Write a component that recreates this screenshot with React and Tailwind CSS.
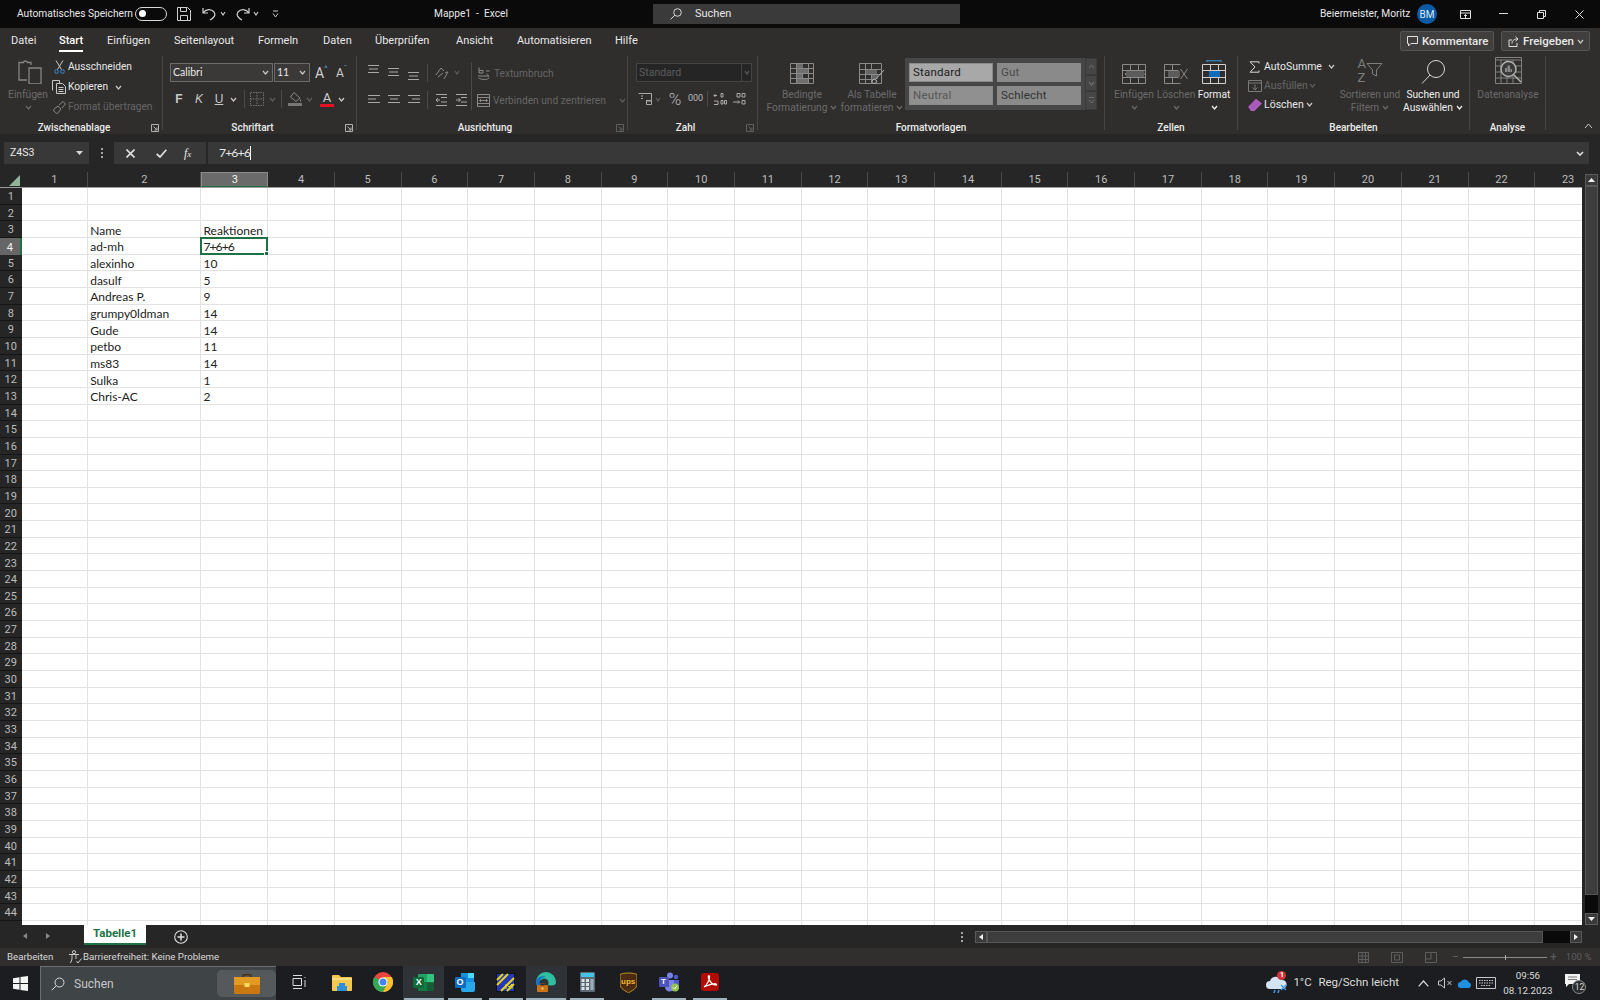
import React from 'react';

const I = ({ w, h = w, c = 'currentColor', sw = 1, children }) => (
  <svg width={w} height={h} viewBox={`0 0 ${w} ${h}`} fill="none" stroke={c} strokeWidth={sw} className="shrink-0 block">{children}</svg>
);
const Chev = ({ c = '#c8c8c8', w = 7 }) => (
  <I w={w} h={5} c={c} sw={1.2}><path d={`M1 1 L${w / 2} 4 L${w - 1} 1`} /></I>
);
const DIM = '#6b6b6b';
const ICON = '#a8a8a8';

const Group = ({ w, label, launcher, children }) => (
  <div className="flex h-[74px] shrink-0 flex-col border-r border-[#454545]" style={{ width: w }}>
    <div className="flex h-[62px]">{children}</div>
    <div className="flex h-[12px] items-center pt-[7px]">
      <div className="flex-1 text-center text-[10px] font-medium leading-[12px] text-[#ececec]">{label}</div>
      {launcher && (
        <div className="flex w-[14px] justify-center">
          <I w={8} h={8} c={launcher === 'dim' ? '#5e5e5e' : '#b0b0b0'}><path d="M.5 7.5v-7h7v7zM2.5 2.5l3.5 3.5M6 3.5V6H3.5" /></I>
        </div>
      )}
    </div>
  </div>
);

const Big = ({ w, icon, l1, l2, chev, color = DIM }) => (
  <div className="flex shrink-0 flex-col items-center" style={{ width: w }}>
    <div className="flex h-[28px] items-end">{icon}</div>
    <div className="mt-[4px] h-[13px] whitespace-nowrap text-[10.2px] leading-[13px]" style={{ color }}>{l1}</div>
    <div className="flex h-[13px] items-center gap-[3px] whitespace-nowrap text-[10.2px] leading-[13px]" style={{ color }}>
      {l2}{chev && <Chev c={color} />}
    </div>
  </div>
);

const Lines = ({ y = 0, rows }) => (
  <I w={13} h={16} c={ICON}>
    {rows.map((r, i) => <path key={i} d={`M${r[0]} ${y + i * 3.5 + .5}H${r[1]}`} />)}
  </I>
);

const Tcell = ({ t, bg, fg, w = 84 }) => (
  <div className="flex h-[19px] items-center border border-[#8a8a8a] pl-[3px] text-[11.5px] tracking-[0.2px]" style={{ width: w, background: bg, color: fg }}>{t}</div>
);

const cols = ['1', '2', '3', '4', '5', '6', '7', '8', '9', '10', '11', '12', '13', '14', '15', '16', '17', '18', '19', '20', '21', '22', '23'];
const colW = (i) => (i === 1 ? 113.3 : 66.7);
const data = { 3: ['Name', 'Reaktionen'], 4: ['ad-mh', '7+6+6'], 5: ['alexinho', '10'], 6: ['dasulf', '5'], 7: ['Andreas P.', '9'], 8: ['grumpy0ldman', '14'], 9: ['Gude', '14'], 10: ['petbo', '11'], 11: ['ms83', '14'], 12: ['Sulka', '1'], 13: ['Chris-AC', '2'] };
const rows = Array.from({ length: 45 }, (_, i) => i + 1);

const Sheet = () => (
  <div className="flex h-[753px] w-[1600px] overflow-hidden bg-[#262626]">
    <div className="flex w-[1582px] flex-col overflow-hidden">
      <div className="flex h-[16px] shrink-0 border-b border-[#9a9a9a]">
        <div className="flex w-[21.5px] shrink-0 items-end justify-end pb-[1px] pr-[2px]">
          <svg width="11" height="11" viewBox="0 0 11 11" className="block"><path d="M11 0V11H0Z" fill="#8fb39b" /></svg>
        </div>
        {cols.map((c, i) => (
          <div key={c} className={i === 2
            ? 'flex shrink-0 items-center justify-center border-b border-t border-x border-b-[#1f7145] border-x-[#8a8a8a] border-t-[#8a8a8a] bg-[#6a6a6a] pt-[2px] text-[11px] text-[#f0f0f0]'
            : 'flex shrink-0 items-center justify-center border-r border-[#4a4a4a] pt-[2px] text-[11px] text-[#bdbdbd]'} style={{ width: colW(i) }}>{c}</div>
        ))}
      </div>
      {rows.map((r) => (
        <div key={r} className="flex h-[16.67px] shrink-0">
          <div className={r === 4
            ? 'flex w-[21.5px] shrink-0 items-center justify-center border-r-2 border-[#1f7145] bg-[#666666] pt-[3px] text-[11px] text-[#f0f0f0]'
            : 'flex w-[21.5px] shrink-0 items-center justify-center border-b border-[#151515] pt-[3px] text-[11px] text-[#bdbdbd]'}>{r === 45 ? '' : r}</div>
          {cols.map((c, i) => {
            const txt = data[r] && (i === 1 ? data[r][0] : i === 2 ? data[r][1] : '');
            const sel = r === 4 && i === 2;
            return (
              <div key={c} className={sel
                ? "relative flex shrink-0 items-center overflow-visible border-b border-r border-[#e2e2e2] bg-white pl-[2px] pt-[3px] font-['Lato',sans-serif] text-[12.2px] leading-none tracking-[-1px] text-[#222222]"
                : "relative flex shrink-0 items-center overflow-visible border-b border-r border-[#e2e2e2] bg-white pl-[2px] pt-[3px] font-['Lato',sans-serif] text-[12px] leading-none text-[#222222]"} style={{ width: colW(i) }}>
                {txt}
                {sel && (
                  <div className="absolute -left-[1px] -top-[1px] h-[17.6px] w-[67.6px] border-2 border-[#1f7145]">
                    <div className="absolute -bottom-[3px] -right-[3px] h-[5px] w-[5px] border border-white bg-[#1f7145]" />
                  </div>
                )}
              </div>
            );
          })}
        </div>
      ))}
    </div>
    <div className="flex w-[18px] flex-col items-center pl-[0.5px] pt-[2px]">
      <div className="flex h-[12px] w-[13px] shrink-0 items-center justify-center border border-[#5a5a5a] bg-[#3a3a3a]">
        <svg width="7" height="4" viewBox="0 0 7 4"><path d="M3.5 0L7 4H0Z" fill="#f0f0f0" /></svg>
      </div>
      <div className="h-[709px] w-[13px] shrink-0 border border-[#555555] bg-[#3d3d3d]" />
      <div className="h-[18px] w-[13px] shrink-0 bg-[#0a0a0a]" />
      <div className="flex h-[12px] w-[13px] shrink-0 items-center justify-center border border-[#5a5a5a] bg-[#3a3a3a]">
        <svg width="7" height="4" viewBox="0 0 7 4"><path d="M0 0H7L3.5 4Z" fill="#f0f0f0" /></svg>
      </div>
    </div>
  </div>
);

const slots = ['task', 'files', 'chrome', 'excel', 'outlook', 'app', 'edge', 'calc', 'ups', 'teams', 'pdf'];
const under = { excel: 40, outlook: 34, app: 34, edge: 40, calc: 34, teams: 34, pdf: 34 };

const Logo = ({ k }) => {
  if (k === 'task') return (
    <I w={15} h={14} c="#dcdcdc"><path d="M1 0.5H10M1 13.5H10M1 3.5H9.5V10.5H1ZM13 2V3M13 5V12" /></I>
  );
  if (k === 'files') return (
    <svg width="20" height="17" viewBox="0 0 20 17"><path d="M0 2a1 1 0 0 1 1-1h6l2 2h10a1 1 0 0 1 1 1v12a1 1 0 0 1-1 1H1a1 1 0 0 1-1-1Z" fill="#f2c84f" /><path d="M0 5H20" stroke="#fbe38e" strokeWidth="1.5" /><path d="M5 17v-5h2V9h6v3h2v5Z" fill="#2f8fd8" /></svg>
  );
  if (k === 'chrome') return (
    <svg width="20" height="20" viewBox="0 0 20 20"><circle cx="10" cy="10" r="10" fill="#e8453c" /><path d="M10 10L1.3 5A10 10 0 0 0 10 20L15 10Z" fill="#34a853" /><path d="M10 20A10 10 0 0 0 18.7 5H10L15 10Z" fill="#fbc02d" /><circle cx="10" cy="10" r="4.6" fill="#fff" /><circle cx="10" cy="10" r="3.5" fill="#4285f4" /></svg>
  );
  if (k === 'excel') return (
    <div className="relative h-[17px] w-[21px]">
      <svg width="21" height="17" viewBox="0 0 21 17" className="block"><path d="M5 1a1 1 0 0 1 1-1h8v8.5H5Z" fill="#21a366" /><path d="M14 0h6a1 1 0 0 1 1 1v7.5h-7Z" fill="#33c481" /><path d="M5 8.5h9V17H6a1 1 0 0 1-1-1Z" fill="#107c41" /><path d="M14 8.5h7V16a1 1 0 0 1-1 1h-6Z" fill="#185c37" /><rect y="3" width="11" height="11" rx="1" fill="#0f6b3a" /></svg>
      <span className="absolute left-0 top-[3px] w-[11px] text-center font-['Liberation_Sans',sans-serif] text-[9px] font-bold leading-[11px] text-white">X</span>
    </div>
  );
  if (k === 'outlook') return (
    <div className="relative h-[19px] w-[20px]">
      <svg width="20" height="19" viewBox="0 0 20 19" className="block"><rect x="6" width="13" height="10" fill="#1490df" /><path d="M6 9h14v8a2 2 0 0 1-2 2H8a2 2 0 0 1-2-2Z" fill="#28a8ea" /><path d="M13 0h6v5h-6Z" fill="#50d9ff" /><rect y="4" width="11" height="11" rx="1" fill="#0f6cbd" /></svg>
      <span className="absolute left-0 top-[4px] w-[11px] text-center font-['Liberation_Sans',sans-serif] text-[9px] font-bold leading-[11px] text-white">O</span>
    </div>
  );
  if (k === 'app') return (
    <svg width="19" height="19" viewBox="0 0 19 19"><rect width="19" height="19" fill="#111" /><rect x="1" y="1" width="17" height="17" fill="#2638b8" /><path d="M1 12L12 1M1 7L7 1M5 18L18 5M11 18L18 11" stroke="#e5d419" strokeWidth="2" /><path d="M10 16V11L13 14L16 11V16" fill="none" stroke="#e5d419" /></svg>
  );
  if (k === 'edge') return (
    <svg width="20" height="21" viewBox="0 0 20 21"><path d="M0 10A10 10 0 0 1 20 10C20 14 16 14 12 13C14 8 10 6 7 7C4 8 2 11 2 14C1 13 0 12 0 10Z" fill="#2fbf9f" /><path d="M0 10C1 5 6 3 10 5C5 5 3 9 4 13C5 17 9 19 13 18C8 21 1 18 0 10Z" fill="#1672c8" /><rect x="1" y="13" width="11" height="7" rx="1" fill="#c9741a" /><rect x="5" y="11.5" width="3" height="2" fill="none" stroke="#7a4510" /><rect x="5.5" y="15.5" width="2" height="2" fill="#f7d558" /></svg>
  );
  if (k === 'calc') return (
    <svg width="15" height="20" viewBox="0 0 15 20"><rect width="15" height="20" rx="1" fill="#5b6a76" /><rect x="1" y="1" width="13" height="4" fill="#43c2e8" /><g fill="#d9dfe3"><rect x="1.5" y="7" width="3" height="3" /><rect x="6" y="7" width="3" height="3" /><rect x="1.5" y="11" width="3" height="3" /><rect x="6" y="11" width="3" height="3" /><rect x="1.5" y="15" width="3" height="3" /><rect x="6" y="15" width="3" height="3" /></g><rect x="10.5" y="7" width="3" height="11" fill="#9fb0bb" /></svg>
  );
  if (k === 'ups') return (
    <div className="relative h-[21px] w-[17px]">
      <svg width="17" height="21" viewBox="0 0 17 21" className="block"><path d="M0 2.5C4 .5 13 .5 17 2.5V12C17 17 11 19 8.5 21C6 19 0 17 0 12Z" fill="#4a2b12" stroke="#e2ab2f" strokeWidth=".8" /></svg>
      <span className="absolute left-0 top-[5px] w-[17px] text-center font-['Liberation_Sans',sans-serif] text-[8px] font-bold leading-[9px] text-[#f3b82e]">ups</span>
    </div>
  );
  if (k === 'teams') return (
    <div className="relative h-[20px] w-[21px]">
      <svg width="21" height="20" viewBox="0 0 21 20" className="block"><circle cx="11" cy="3.5" r="3" fill="#7b83eb" /><circle cx="17" cy="5" r="2.3" fill="#5059c9" /><path d="M6 8h9v7a4 4 0 0 1-9 0Z" fill="#7b83eb" /><path d="M15 8h5v5a3 3 0 0 1-5 2Z" fill="#5059c9" /><rect y="5" width="10" height="10" rx="1" fill="#4b53bc" /><circle cx="16" cy="15.5" r="4" fill="#92c353" /><path d="M14 15.5l1.5 1.5l2.5-3" stroke="#fff" fill="none" /></svg>
      <span className="absolute left-0 top-[5px] w-[10px] text-center font-['Liberation_Sans',sans-serif] text-[8px] font-bold leading-[10px] text-white">T</span>
    </div>
  );
  return (
    <svg width="18" height="18" viewBox="0 0 18 18"><rect width="18" height="18" rx="3" fill="#b30b00" /><path d="M3 14C6 12 9 6 8.5 3.5C8 2 7 3 7.5 5C8.5 9 12 12 15 12C16 12 15.5 10.5 13 10.8C9 11 5 13 3 14Z" fill="none" stroke="#fff" strokeWidth="1.3" /></svg>
  );
};

export default function App() {
  return (
    <div className="flex h-[1000px] w-[1600px] flex-col overflow-hidden bg-[#262626] font-['Roboto',sans-serif] text-[#e8e8e8]">
      {/* Title bar */}
      <div className="flex h-[28px] shrink-0 items-center bg-[#0a0a0a]">
        <div className="flex w-[653px] shrink-0 items-center pl-[17px]">
          <div className="w-[118px] whitespace-nowrap text-[10.2px]">Automatisches Speichern</div>
          <div className="flex h-[14px] w-[32px] items-center rounded-full border border-[#d8d8d8] pl-[3px]"><div className="h-[7px] w-[7px] rounded-full bg-white" /></div>
          <div className="ml-[10px]"><I w={14} h={14} c="#d0d0d0"><path d="M.5.5h10l3 3v10H.5ZM3.5.5v4h6v-4M3.5 13.5v-5h7v5" /></I></div>
          <div className="ml-[11px]"><I w={14} h={14} c="#d0d0d0" sw={1.2}><path d="M1 1v5h5M1 6C4 2 9 1.5 12 5C14 8 12 11 8 13" /></I></div>
          <div className="ml-[4px]"><Chev w={6} /></div>
          <div className="ml-[10px]"><I w={14} h={14} c="#d0d0d0" sw={1.2}><path d="M13 1v5H8M13 6C10 2 5 1.5 2 5C0 8 2 11 6 13" /></I></div>
          <div className="ml-[3px]"><Chev w={6} /></div>
          <div className="ml-[13px]"><I w={7} h={8} c="#c8c8c8"><path d="M1 1H6M1 3.5L3.5 7L6 3.5" /></I></div>
          <div className="ml-[155px] whitespace-nowrap text-[10.2px]">Mappe1&nbsp; -&nbsp; Excel</div>
        </div>
        <div className="flex h-[20px] w-[307px] shrink-0 items-center bg-[#3a3a3a] pl-[17px] text-[11px]">
          <I w={12} c="#d8d8d8"><circle cx="7.5" cy="4.5" r="3.8" /><path d="M4.8 7.2L.6 11.4" /></I>
          <span className="ml-[13px]">Suchen</span>
        </div>
        <div className="flex flex-1 items-center">
          <div className="ml-[360px] w-[97px] whitespace-nowrap text-[10.2px]">Beiermeister, Moritz</div>
          <div className="flex h-[20px] w-[20px] items-center justify-center rounded-full bg-[#0a5aa5] text-[10px] text-[#dce8f4]">BM</div>
          <div className="ml-[23px]"><I w={11} h={9} c="#e0e0e0"><path d="M.5.5h10v8H.5ZM.5 3h10M5.5 8V4.5M4 6l1.5-1.5L7 6" /></I></div>
          <div className="ml-[28px]"><I w={9} h={2} c="#d8d8d8"><path d="M0 .5H9" /></I></div>
          <div className="ml-[29px]"><I w={9} c="#e0e0e0"><path d="M.5 2.5h6v6h-6ZM2.5 2.5v-2h6v6h-2" /></I></div>
          <div className="ml-[29px]"><I w={9} c="#e0e0e0"><path d="M.5.5l8 8M8.5.5l-8 8" /></I></div>
        </div>
      </div>

      {/* Ribbon */}
      <div className="h-[106px] shrink-0 bg-[#2f2e2d]">
        <div className="flex h-[26px] pl-[11px] pt-[6px] text-[11px] leading-[14px]">
          {[['Datei', 48], ['Start', 48], ['Einfügen', 67], ['Seitenlayout', 84], ['Formeln', 65], ['Daten', 52], ['Überprüfen', 81], ['Ansicht', 61], ['Automatisieren', 98], ['Hilfe', 40]].map(([t, w]) => (
            <div key={t} className="shrink-0" style={{ width: w }}>
              <span className={t === 'Start' ? 'inline-block border-b-2 border-white pb-[2px] font-medium text-white' : 'inline-block border-b-2 border-transparent pb-[2px]'}>{t}</span>
            </div>
          ))}
          <div className="ml-[745px] -mt-[3px] flex h-[20px] w-[94px] shrink-0 items-center rounded-[2px] border border-[#555555] bg-[#403f3e] pl-[6px] text-[11.5px] font-medium">
            <I w={11} h={11} c="#e0e0e0"><path d="M.5.5h10v7H4L1.5 10V7.5H.5Z" /></I>
            <span className="ml-[4px]">Kommentare</span>
          </div>
          <div className="ml-[7px] -mt-[3px] flex h-[20px] w-[89px] shrink-0 items-center rounded-[2px] border border-[#555555] bg-[#403f3e] pl-[6px] text-[11.5px] font-medium">
            <I w={11} h={11} c="#e0e0e0"><path d="M4 4H1v6.5h8V7M4 7.5C4 4 7 3 9 3M7.5 .8L10 3L7.5 5.2" /></I>
            <span className="ml-[4px]">Freigeben</span>
            <span className="ml-auto pr-[5px]"><Chev /></span>
          </div>
        </div>
        <div className="flex pt-[2px]">
          {/* Zwischenablage */}
          <Group w={163} label="Zwischenablage" launcher="on">
            <div className="flex w-[52px] shrink-0 flex-col items-center pl-[4px] pt-[4px]">
              <div className="ml-[3px]"><I w={24} c="#858585" sw={1.3}><path d="M13 5V2.5H9.5C9 .5 6 .5 5.5 2.5H1V20H9M11 8H23V24H11Z" /></I></div>
              <div className="mt-[4px] text-[10.2px] leading-[14px] text-[#6b6b6b]">Einfügen</div>
              <div className="mt-[3px]"><Chev c="#6b6b6b" /></div>
            </div>
            <div className="flex flex-col whitespace-nowrap pt-[1px] text-[10.2px] leading-[14px]">
              <div className="flex h-[20px] items-center"><div className="w-[16px] pl-[2px]"><I w={11} h={14} c="#c8c8c8"><path d="M2 .5L7.5 9.5M9 .5L3.5 9.5" /><circle cx="2.5" cy="11.5" r="1.8" stroke="#3a8fd8" /><circle cx="8.5" cy="11.5" r="1.8" stroke="#3a8fd8" /></I></div>Ausschneiden</div>
              <div className="flex h-[20px] items-center"><div className="w-[16px]"><I w={14} h={14} c="#c8c8c8"><path d="M.5 10.5V.5H7.5V3M4.5 3.5h6l3 3v7h-9ZM6.5 7.5h5M6.5 9.5h5M6.5 11.5h5" /></I></div><span className="w-[47px]">Kopieren</span><Chev /></div>
              <div className="flex h-[20px] items-center text-[#666666]"><div className="w-[16px] pl-[1px]"><I w={13} h={13} c="#8a8a8a"><path d="M.5 8.5L5 5L8 8L4.5 12.5C3 12.5 1 11 .5 8.5ZM6 4L10 .5L12.5 3L9 7" /></I></div>Format übertragen</div>
            </div>
          </Group>
          {/* Schriftart */}
          <Group w={194} label="Schriftart" launcher="on">
            <div className="flex flex-col pl-[7px] pt-[7px]">
              <div className="flex h-[19px] items-center">
                <div className="flex h-[19px] w-[103px] items-center border border-[#6a6a6a] bg-[#3a3937] pl-[2px] pr-[3px] font-['Lato',sans-serif] text-[10.5px]">Calibri<span className="ml-auto"><Chev /></span></div>
                <div className="ml-[1px] flex h-[19px] w-[36px] items-center border border-[#6a6a6a] bg-[#3a3937] pl-[2px] pr-[3px] font-['Lato',sans-serif] text-[10.5px]">11<span className="ml-auto"><Chev /></span></div>
                <div className="ml-[5px] flex w-[15px] items-start text-[14px] leading-[16px] text-[#cfcfcf]">A<span className="text-[8px] leading-[8px] text-[#5aa7e8]">^</span></div>
                <div className="ml-[6px] flex w-[15px] items-start text-[12px] leading-[16px] text-[#cfcfcf]">A<span className="text-[8px] leading-[8px] text-[#5aa7e8]">ˇ</span></div>
              </div>
              <div className="mt-[8px] flex h-[18px] items-center text-[12px] text-[#c8c8c8]">
                <span className="w-[18px] text-center font-['Liberation_Sans',sans-serif] font-bold">F</span>
                <span className="w-[22px] text-center font-['Liberation_Sans',sans-serif] italic">K</span>
                <span className="w-[18px] text-center font-['Liberation_Sans',sans-serif] underline">U</span>
                <span className="flex w-[10px] justify-center"><Chev /></span>
                <span className="ml-[6px] h-[18px] w-[1px] bg-[#4a4a4a]" />
                <span className="ml-[5px]"><I w={14} c="#707070"><path d="M.5.5h13v13H.5ZM7 .5v13M.5 7h13" strokeDasharray="1.5 1" /></I></span>
                <span className="ml-[3px] flex w-[10px] justify-center"><Chev c="#5e5e5e" /></span>
                <span className="ml-[4px] h-[18px] w-[1px] bg-[#4a4a4a]" />
                <span className="ml-[6px] flex flex-col items-center"><I w={13} h={10} c="#8a8a8a"><path d="M5 .5L11 6L7 9.5L1.5 5ZM11.5 7.5v2" /></I><span className="mt-[1px] h-[3px] w-[14px] bg-[#777777]" /></span>
                <span className="ml-[2px] flex w-[10px] justify-center"><Chev c="#5e5e5e" /></span>
                <span className="ml-[6px] flex flex-col items-center"><span className="text-[13px] leading-[13px] text-[#cfcfcf]">A</span><span className="h-[3px] w-[14px] bg-[#e81123]" /></span>
                <span className="ml-[2px] flex w-[10px] justify-center"><Chev /></span>
              </div>
            </div>
          </Group>
          {/* Ausrichtung */}
          <Group w={271} label="Ausrichtung" launcher="dim">
            <div className="flex w-[114px] shrink-0 flex-col pl-[10px] pt-[7px]">
              <div className="flex h-[19px] items-center gap-[7px]">
                <Lines rows={[[1, 12], [2, 11], [1, 12]]} y={0} />
                <Lines rows={[[1, 12], [2, 11], [1, 12]]} y={3} />
                <Lines rows={[[1, 12], [2, 11], [1, 12]]} y={7} />
                <span className="h-[18px] w-[1px] bg-[#4a4a4a]" />
                <I w={14} c="#8a8a8a"><path d="M1 9L6 2L9 5M3 11L8 7M9 13L13 6M13 6L10 6.5" /></I>
                <span className="-ml-[2px]"><Chev c="#5e5e5e" w={6} /></span>
              </div>
              <div className="mt-[8px] flex h-[19px] items-center gap-[7px]">
                <Lines y={3} rows={[[1, 13], [1, 9], [1, 13]]} />
                <Lines y={3} rows={[[1, 13], [3, 11], [1, 13]]} />
                <Lines y={3} rows={[[1, 13], [5, 13], [1, 13]]} />
                <span className="h-[18px] w-[1px] bg-[#4a4a4a]" />
                <I w={13} h={14} c={ICON}><path d="M1 1.5H12M6 4.5H12M6 9H12M1 12.5H12M1 7H5M3 5L1 7L3 9" /></I>
                <I w={13} h={14} c={ICON}><path d="M1 1.5H12M6 4.5H12M6 9H12M1 12.5H12M1 7H5M3.5 5L5.5 7L3.5 9" /></I>
              </div>
            </div>
            <div className="my-[6px] h-[48px] w-[1px] shrink-0 bg-[#4a4a4a]" />
            <div className="flex flex-col whitespace-nowrap pl-[5px] pt-[8px] text-[10.2px] text-[#666666]">
              <div className="flex h-[19px] items-center gap-[3px]"><I w={14} c="#8a8a8a"><path d="M2 .5V6M2 3.5H6V6H2M9 4H12.5M1 9H12L9.5 7M12 10.5C12 13 4 13 1.5 11" /></I>Textumbruch</div>
              <div className="mt-[8px] flex h-[19px] items-center gap-[3px]"><I w={13} c="#8a8a8a"><path d="M.5.5h12v12H.5ZM.5 3.5h12M.5 9.5h12M2.5 6.5h8M4 5L2.5 6.5L4 8M9 5l1.5 1.5L9 8" /></I>Verbinden und zentrieren<span className="ml-[10px]"><Chev c="#5e5e5e" /></span></div>
            </div>
          </Group>
          {/* Zahl */}
          <Group w={130} label="Zahl" launcher="dim">
            <div className="flex flex-col pl-[8px] pt-[7px]">
              <div className="flex h-[19px] w-[116px] border border-[#444444] bg-[#252525] text-[10.5px] text-[#5e5e5e]">
                <div className="flex flex-1 items-center pl-[2px] pt-[1px]">Standard</div>
                <div className="flex w-[10px] items-center justify-center border-l border-[#444444]"><Chev c="#5e5e5e" w={6} /></div>
              </div>
              <div className="mt-[8px] flex h-[18px] items-center text-[#b8b8b8]">
                <span className="ml-[2px]"><I w={14} h={12} c={ICON}><path d="M.5.5h13v7H8M3 3h2M3 5.5h2M8.5 8h5v3.5h-5Z" /></I></span>
                <span className="ml-[3px]"><Chev c="#5e5e5e" w={6} /></span>
                <span className="ml-[6px] w-[16px] text-center text-[17px] font-light leading-[17px]">%</span>
                <span className="ml-[5px] w-[14px] text-center text-[9px]">000</span>
                <span className="ml-[5px] h-[16px] w-[1px] bg-[#4a4a4a]" />
                <span className="ml-[5px]"><I w={14} c={ICON}><path d="M4 3.5H1M2.5 2L1 3.5L2.5 5M8 1.5h2V5H8ZM1 9h4v3.5H1M8 8.5h2V12H8ZM11.5 8.5h2V12h-2Z" /></I></span>
                <span className="ml-[6px]"><I w={14} c={ICON}><path d="M4 1.5h3V5H4ZM9 1.5h3V5H9ZM0 10H6.5M5 8.5L6.5 10L5 11.5M9 8.5h3V12H9Z" /></I></span>
              </div>
            </div>
          </Group>
          {/* Formatvorlagen */}
          <Group w={347} label="Formatvorlagen">
            <div className="ml-[2px] flex shrink-0">
              <Big w={84} color={DIM} l1="Bedingte" l2="Formatierung" chev icon={
                <I w={24} h={21} c="#8a8a8a"><path d="M.5.5h23v20H.5ZM.5 5.5h23M.5 10.5h23M.5 15.5h23M6.5.5v20M12.5.5v20M18.5.5v20" /><path d="M7 1h6v4H7ZM7 6h11v4H7ZM7 11h5v4H7ZM7 16h11v4H7Z" fill="#6e6e6e" stroke="none" /></I>
              } />
              <Big w={56} color={DIM} l1="Als Tabelle" l2="formatieren" chev icon={
                <I w={26} h={21} c="#8a8a8a"><path d="M.5.5h22v20H.5ZM.5 6.5h22M.5 11.5h22M.5 16.5h14M6.5.5v20M12.5.5v20" /><path d="M7 7h11v4H7ZM13 12h6v4h-6Z" fill="#666666" stroke="none" /><path d="M25 7L16 17M13 18C13 20 14 21 17 20L18 18L15 16Z" stroke="#b0b0b0" /></I>
              } />
            </div>
            <div className="ml-[5px] mt-[2px] flex h-[52px] w-[192px] shrink-0 bg-[#464646] pl-[4px] pt-[5px]">
              <div className="grid w-[172px] shrink-0 grid-cols-2 content-start gap-x-[4px] gap-y-[4px]">
                <Tcell t="Standard" bg="#a8a8a8" fg="#1c1c1c" />
                <Tcell t="Gut" bg="#8a8a8a" fg="#4a4a4a" />
                <Tcell t="Neutral" bg="#909090" fg="#565656" />
                <Tcell t="Schlecht" bg="#8a8a8a" fg="#333333" />
              </div>
              <div className="-mt-[5px] ml-[4px] flex w-[12px] shrink-0 flex-col">
                <div className="flex h-[17px] items-center justify-center border border-[#3a3a3a]"><I w={7} h={5} c="#6e6e6e"><path d="M1 4L3.5 1L6 4" /></I></div>
                <div className="flex h-[16px] items-center justify-center border border-[#3a3a3a]"><Chev c="#6e6e6e" /></div>
                <div className="flex h-[19px] items-center justify-center border border-[#3a3a3a]"><I w={7} h={7} c="#6e6e6e"><path d="M1 .5H6M1 3L3.5 6L6 3" /></I></div>
              </div>
            </div>
          </Group>
          {/* Zellen */}
          <Group w={133} label="Zellen">
            <div className="ml-[8px] flex">
              <Big w={42} l1="Einfügen" l2="" chev icon={
                <I w={24} h={20} c="#8a8a8a"><path d="M.5.5h23v19H.5ZM.5 6.5h23M.5 13.5h23M8.5.5v19M16.5.5v6M16.5 13.5v6M23 10H3M7 6.5L3 10L7 13.5" /><path d="M4 7h18v6H4Z" fill="#5c5c5c" stroke="none" /></I>
              } />
              <Big w={42} l1="Löschen" l2="" chev icon={
                <I w={24} h={20} c="#8a8a8a"><path d="M.5.5h16M.5 6.5h14M.5 13.5h14M.5 19.5h16M.5.5v19M8.5.5v6M8.5 13.5v6M16.5 5l7 10M23.5 5l-7 10" /><path d="M4 7h12v6H4Z" fill="#5c5c5c" stroke="none" /></I>
              } />
              <Big w={34} color="#f0f0f0" l1="Format" l2="" chev icon={
                <I w={24} h={24} c="#cfcfcf"><path d="M5 .8H19M5 0v2M19 0v2" stroke="#3a9be0" /><path d="M.5 4.5h23v19H.5ZM.5 10.5h23M.5 17.5h23M8.5 4.5v19M16.5 4.5v19" /><path d="M7 11h11v6H7Z" fill="#0f6cbd" stroke="none" /></I>
              } />
            </div>
          </Group>
          {/* Bearbeiten */}
          <Group w={232} label="Bearbeiten">
            <div className="ml-[10px] flex w-[92px] shrink-0 flex-col pt-[1px] text-[10.5px] leading-[14px]">
              <div className="flex h-[19px] items-center"><div className="w-[16px] pl-[1px]"><I w={11} h={12} c="#d8d8d8"><path d="M10 2.5V.8H1L6 6L1 11.2H10V9.5" /></I></div><span className="w-[64px] whitespace-nowrap">AutoSumme</span><Chev /></div>
              <div className="flex h-[19px] items-center text-[#666666]"><div className="w-[16px]"><I w={14} h={12} c="#7a7a7a"><path d="M.5.5h13v11H.5ZM.5 3h13M7 4.5V10M4.5 7.5L7 10L9.5 7.5" /></I></div><span className="w-[45px]">Ausfüllen</span><Chev c="#5e5e5e" /></div>
              <div className="flex h-[19px] items-center"><div className="w-[16px]"><I w={14} h={13} c="#b55fc4" sw={1.2}><path d="M1 9L8 1.5L13 5.5L6 12.5H3.5Z" fill="#a85abb" /></I></div><span className="w-[42px]">Löschen</span><Chev /></div>
            </div>
            <Big w={60} l1="Sortieren und" l2="Filtern" chev icon={
              <div className="relative"><I w={25} h={26} c="#7e7e7e"><path d="M9 5.5H24L18.5 12V18L14.5 16V12Z" /></I>
                <span className="absolute -top-[1px] left-0 text-[13px] leading-[13px] text-[#7e7e7e]">A</span>
                <span className="absolute bottom-0 left-0 text-[13px] leading-[13px] text-[#7e7e7e]">Z</span></div>
            } />
            <Big w={66} color="#f0f0f0" l1="Suchen und" l2="Auswählen" chev icon={
              <I w={24} c="#d8d8d8"><circle cx="15" cy="9" r="8.5" /><path d="M9 15L1 23.5" /></I>
            } />
          </Group>
          {/* Analyse */}
          <Group w={76} label="Analyse">
            <div className="w-[76px]">
              <Big w={76} l1="Datenanalyse" l2="" icon={
                <I w={27} h={27} c="#808080"><path d="M.5.5h26v26H.5ZM.5 3h26M.5 9h26M.5 15h26M.5 21h26M6 3v24M12 3v24M18 3v24" /><circle cx="13.5" cy="12" r="7.5" fill="#3a3a3a" stroke="#b0b0b0" strokeWidth="1.5" /><path d="M10 15V11h2v4ZM12.5 15V8.5h2.5V15ZM15.5 15v-3H17v3Z" fill="#8a8a8a" stroke="none" /><path d="M19 18L26 25" stroke="#b0b0b0" strokeWidth="1.5" /></I>
              } />
            </div>
          </Group>
          <div className="flex h-[76px] flex-1 items-end justify-end pb-[3px] pr-[7px]"><I w={9} h={6} c="#c8c8c8"><path d="M1 5L4.5 1L8 5" /></I></div>
        </div>
      </div>

      {/* Formula bar */}
      <div className="mt-[8px] flex h-[22px] shrink-0 items-stretch pl-[4px]">
        <div className="flex w-[85px] shrink-0 items-center justify-between bg-[#383838] pl-[6px] pr-[6px] text-[10.5px]">Z4S3<svg width="7" height="4" viewBox="0 0 7 4"><path d="M0 0H7L3.5 4Z" fill="#d8d8d8" /></svg></div>
        <div className="flex w-[25px] shrink-0 items-center justify-center"><I w={2} h={10} c="none"><circle cx="1" cy="1" r="1" fill="#d0d0d0" /><circle cx="1" cy="5" r="1" fill="#d0d0d0" /><circle cx="1" cy="9" r="1" fill="#d0d0d0" /></I></div>
        <div className="flex w-[92px] shrink-0 items-center bg-[#383838]">
          <span className="ml-[12px]"><I w={9} c="#e0e0e0" sw={1.6}><path d="M.5.5l8 8M8.5.5l-8 8" /></I></span>
          <span className="ml-[21px]"><I w={11} h={9} c="#e0e0e0" sw={1.7}><path d="M.7 5L4 8L10.3 .7" /></I></span>
          <span className="ml-[17px] font-['Liberation_Serif',serif] text-[12px] italic leading-[12px]">f<span className="text-[9px]">x</span></span>
        </div>
        <div className="ml-[2px] flex w-[1381px] shrink-0 items-center bg-[#383838] pl-[11px] font-['Lato',sans-serif] text-[12.2px]"><span className="tracking-[-0.9px]">7+6+6</span><span className="h-[14px] w-[1px] bg-white" /><span className="ml-auto pr-[5px]"><I w={8} h={5} c="#e0e0e0" sw={1.6}><path d="M1 1L4 4L7 1" /></I></span></div>
      </div>

      <div className="mt-[8px] shrink-0"><Sheet /></div>

      {/* Sheet tabs */}
      <div className="flex h-[23px] shrink-0 items-start bg-[#262626]">
        <span className="ml-[23px] mt-[8px]"><svg width="4" height="6" viewBox="0 0 4 6"><path d="M4 0V6L0 3Z" fill="#8a8a8a" /></svg></span>
        <span className="ml-[19px] mt-[8px]"><svg width="4" height="6" viewBox="0 0 4 6"><path d="M0 0V6L4 3Z" fill="#8a8a8a" /></svg></span>
        <div className="ml-[34px] flex h-[20px] w-[62px] items-center justify-center border-b-2 border-[#1f7145] bg-white text-[11.5px] font-bold text-[#217346]">Tabelle1</div>
        <span className="ml-[28px] mt-[5px]"><I w={14} c="#e0e0e0" sw={1.1}><circle cx="7" cy="7" r="6.3" /><path d="M7 3.5V10.5M3.5 7H10.5" strokeWidth="1.5" /></I></span>
        <span className="ml-[773px] mt-[7px]"><I w={2} h={10} c="none"><circle cx="1" cy="1" r="1" fill="#d0d0d0" /><circle cx="1" cy="5" r="1" fill="#d0d0d0" /><circle cx="1" cy="9" r="1" fill="#d0d0d0" /></I></span>
        <div className="ml-[12px] mt-[6px] flex h-[12px] w-[607px] items-stretch">
          <div className="flex w-[12px] items-center justify-center border border-[#5a5a5a] bg-[#3a3a3a]"><svg width="4" height="6" viewBox="0 0 4 6"><path d="M4 0V6L0 3Z" fill="#f0f0f0" /></svg></div>
          <div className="flex-1 border border-[#555555] bg-[#3d3d3d]" />
          <div className="w-[27px] bg-[#0a0a0a]" />
          <div className="flex w-[12px] items-center justify-center border border-[#5a5a5a] bg-[#3a3a3a]"><svg width="4" height="6" viewBox="0 0 4 6"><path d="M0 0V6L4 3Z" fill="#f0f0f0" /></svg></div>
        </div>
      </div>

      {/* Status */}
      <div className="flex h-[18px] shrink-0 items-center bg-[#302f2e] text-[9.7px] text-[#d8d8d8]">
        <span className="ml-[7px] w-[61px]">Bearbeiten</span>
        <I w={14} h={14} c="#c8c8c8"><circle cx="6" cy="2.2" r="1.6" /><path d="M1 4.5H11M4 5V9L2.5 13M8 5V9M8.5 11L10 13L13.5 8.5" /></I>
        <span className="ml-[1px] w-[133px] whitespace-nowrap">Barrierefreiheit: Keine Probleme</span>
        <span className="ml-[1142px]"><I w={11} c="#5e5e5e"><path d="M.5.5h10v10H.5ZM.5 4h10M.5 7.5h10M4 .5v10M7.5 .5v10" /></I></span>
        <span className="ml-[22px]"><I w={12} h={11} c="#5e5e5e"><path d="M.5.5h11v10H.5ZM3.5 3h5v5h-5Z" /></I></span>
        <span className="ml-[22px]"><I w={12} h={11} c="#5e5e5e"><path d="M.5.5h11v10H.5ZM.5 7h5.5V.5" /></I></span>
        <span className="ml-[15px] text-[12px] leading-none text-[#5e5e5e]">−</span>
        <div className="relative ml-[4px] h-[1px] w-[84px] bg-[#8a8a8a]"><span className="absolute -top-[2px] left-[42px] h-[5px] w-[1px] bg-[#b0b0b0]" /></div>
        <span className="ml-[3px] text-[12px] leading-none text-[#5e5e5e]">+</span>
        <span className="ml-[9px] whitespace-nowrap text-[#5e5e5e]">100 %</span>
      </div>

      {/* Taskbar */}
      <div className="flex h-[34px] shrink-0 items-stretch bg-[#1b1d20] text-[#dcdcdc]">
        <div className="flex w-[40px] shrink-0 items-center justify-center">
          <svg width="15" height="15" viewBox="0 0 15 15"><path d="M0 2.2L6.5 1.2V7H0ZM7.5 1L15 0V7H7.5ZM0 8H6.5V13.8L0 12.8ZM7.5 8H15V15L7.5 14Z" fill="#f4f4f4" /></svg>
        </div>
        <div className="flex w-[236px] shrink-0 items-center border-l border-t border-[#6a6e70] bg-[#3f4447] pl-[10px] text-[12px] text-[#c8c8c8]">
          <I w={14} c="#dcdcdc"><circle cx="8.5" cy="5.5" r="4.5" /><path d="M5.2 8.8L.7 13.3" /></I>
          <span className="ml-[9px] w-[144px]">Suchen</span>
          <div className="flex h-[27px] w-[59px] items-center justify-center rounded-[5px] bg-[#55595c]">
            <svg width="26" height="20" viewBox="0 0 26 20"><rect x="9" y="0.8" width="8" height="4" rx="1" fill="none" stroke="#4a3010" strokeWidth="1.5" /><rect y="3" width="26" height="17" rx="1.5" fill="#c9780f" /><rect y="3" width="26" height="8" fill="#e39a22" /><rect x="10.5" y="9" width="5" height="4" fill="#f7dc5c" /></svg>
          </div>
        </div>
        <div className="ml-[2.5px] flex">
          {slots.map((k) => (
            <div key={k} className={k === 'excel' || k === 'edge'
              ? 'flex w-[40.9px] flex-col items-center bg-[#2f3337]'
              : k === 'task' ? 'flex w-[43px] flex-col items-center pr-[2px]' : 'flex w-[40.9px] flex-col items-center'}>
              <div className="flex h-[32px] items-center justify-center"><Logo k={k} /></div>
              {under[k] ? <div className="h-[2px] bg-[#9fb2bc]" style={{ width: under[k] }} /> : null}
            </div>
          ))}
        </div>
        <div className="ml-[536px] flex items-center">
          <div className="relative h-[20px] w-[22px]">
            <svg width="22" height="20" viewBox="0 0 22 20" className="block"><path d="M4 16a4 4 0 0 1 0-8a6 6 0 0 1 11-1a4.5 4.5 0 0 1 2 9Z" fill="#d5e4f2" /><path d="M9 17l-1 3M13 17l-1 3" stroke="#3f9be8" strokeWidth="1.5" /><path d="M15 12l5 5M20 12l-5 5" stroke="#3f9be8" strokeWidth="1.3" /></svg>
            <span className="absolute -top-[2px] left-[11px] flex h-[9px] w-[9px] items-center justify-center rounded-full bg-[#d13438] text-[7px] font-bold leading-none text-white">1</span>
          </div>
          <span className="ml-[5px] w-[25px] whitespace-nowrap text-[11.5px]">1°C</span>
          <span className="w-[93px] whitespace-nowrap text-[11.5px]">Reg/Schn leicht</span>
          <span className="ml-[7px]"><I w={11} h={7} c="#dcdcdc" sw={1.2}><path d="M.7 6.3L5.5 1L10.3 6.3" /></I></span>
          <span className="ml-[9px]"><I w={14} h={12} c="#c8c8c8"><path d="M.5 4v4h2.5L6.5 11V1L3 4ZM9.5 4l4 4M13.5 4l-4 4" /></I></span>
          <span className="ml-[6px]"><svg width="14" height="9" viewBox="0 0 14 9"><path d="M3 9a3 3 0 0 1-.5-6a4.5 4.5 0 0 1 8.3.3A3 3 0 0 1 11 9Z" fill="#1f8fe0" /></svg></span>
          <span className="ml-[4px]"><I w={20} h={12} c="#c8c8c8"><path d="M.5.5h19v11H.5Z" /><path d="M3 3.5h14M3 6h14M5 8.5h10" strokeDasharray="1.5 1" /></I></span>
          <div className="ml-[8px] flex w-[47px] flex-col items-center text-[9.8px] leading-[15px]"><span>09:56</span><span className="whitespace-nowrap">08.12.2023</span></div>
          <div className="relative ml-[14px] h-[22px] w-[20px]">
            <svg width="15" height="13" viewBox="0 0 15 13" className="mt-[2px] block"><path d="M0 0H15V10H4L1 13V10H0Z" fill="#f2f2f2" /><path d="M3 3H12M3 5.5H12" stroke="#777" /></svg>
            <span className="absolute left-[7px] top-[8px] flex h-[14px] w-[14px] items-center justify-center rounded-full border border-[#8a8a8a] bg-[#2a2c2f] text-[8.5px] leading-none">12</span>
          </div>
        </div>
      </div>
    </div>
  );
}
